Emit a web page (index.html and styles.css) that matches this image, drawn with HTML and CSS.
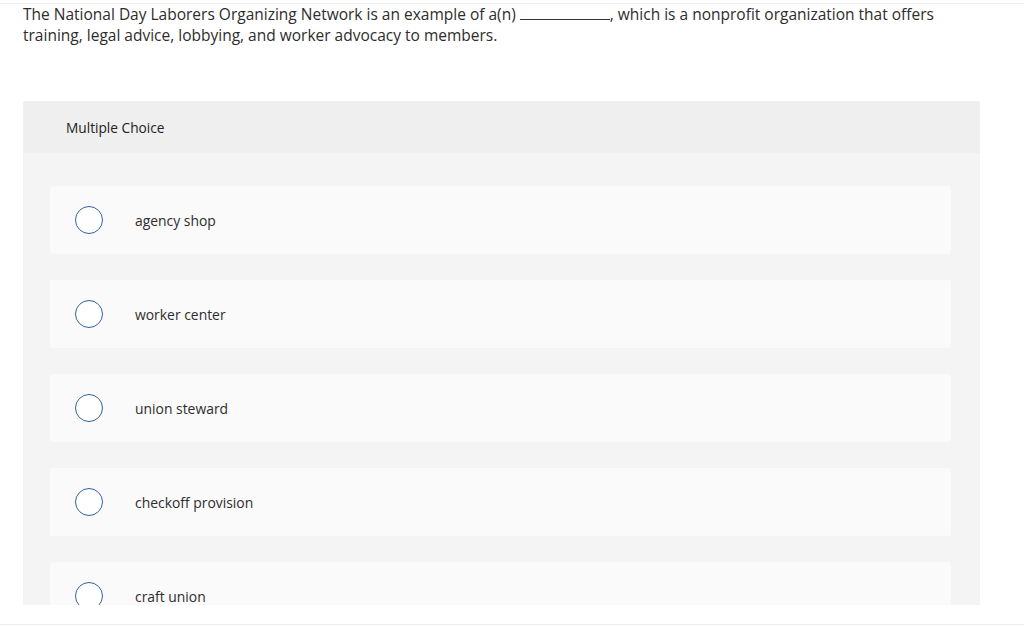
FILE: index.html
```html
<!DOCTYPE html>
<html lang="en">
<head>
<meta charset="utf-8">
<title>Multiple Choice</title>
<link rel="stylesheet" href="styles.css">
</head>
<body>
<div class="frame">
  <div class="viewport">
    <p class="question">The National Day Laborers Organizing Network is an example of a(n) <span class="blank"></span>, which is a nonprofit organization that offers training, legal advice, lobbying, and worker advocacy to members.</p>
    <section class="panel">
      <header class="panel-head">Multiple Choice</header>
      <div class="options">
        <label class="option"><span class="radio"></span><span class="label">agency shop</span></label>
        <label class="option"><span class="radio"></span><span class="label">worker center</span></label>
        <label class="option"><span class="radio"></span><span class="label">union steward</span></label>
        <label class="option"><span class="radio"></span><span class="label">checkoff provision</span></label>
        <label class="option"><span class="radio"></span><span class="label">craft union</span></label>
      </div>
    </section>
  </div>
</div>
</body>
</html>
```

FILE: styles.css
```css
html, body {
  margin: 0;
  padding: 0;
  background: #ffffff;
}

body {
  font-family: "Open Sans", Lato, "Liberation Sans", sans-serif;
  color: #333333;
}

.frame {
  margin-top: 3px;
  height: 622px;
  border-top: 1px solid #ececec;
  border-bottom: 1px solid #ececec;
  box-sizing: border-box;
}

.viewport {
  height: 601px;
  overflow: hidden;
}

.question {
  margin: 0;
  padding: 0 50px 0 23px;
  font-size: 15.5px;
  line-height: 21px;
  color: #2d2d2d;
}

.blank {
  display: inline-block;
  width: 90px;
  border-bottom: 1px solid #333333;
  vertical-align: baseline;
  height: 12px;
}

.panel {
  margin: 55px 44px 0 23px;
  background: #f4f4f4;
  border-radius: 3px 3px 0 0;
}

.panel-head {
  height: 52px;
  display: flex;
  align-items: center;
  padding-left: 43px;
  background: #efefef;
  border-radius: 3px 3px 0 0;
  font-size: 13.7px;
  color: #222222;
}

.options {
  display: flex;
  flex-direction: column;
  gap: 26px;
  padding: 33px 29px 40px 27px;
}

.option {
  height: 68px;
  display: flex;
  align-items: center;
  background: #fafafa;
  border-radius: 3px;
  padding-left: 25px;
  box-sizing: border-box;
}

.radio {
  width: 28px;
  height: 28px;
  box-sizing: border-box;
  border: 1px solid #34629b;
  border-radius: 50%;
  background: #ffffff;
  flex: none;
}

.label {
  margin-left: 32px;
  font-size: 13.9px;
  color: #2d2d2d;
}
```
